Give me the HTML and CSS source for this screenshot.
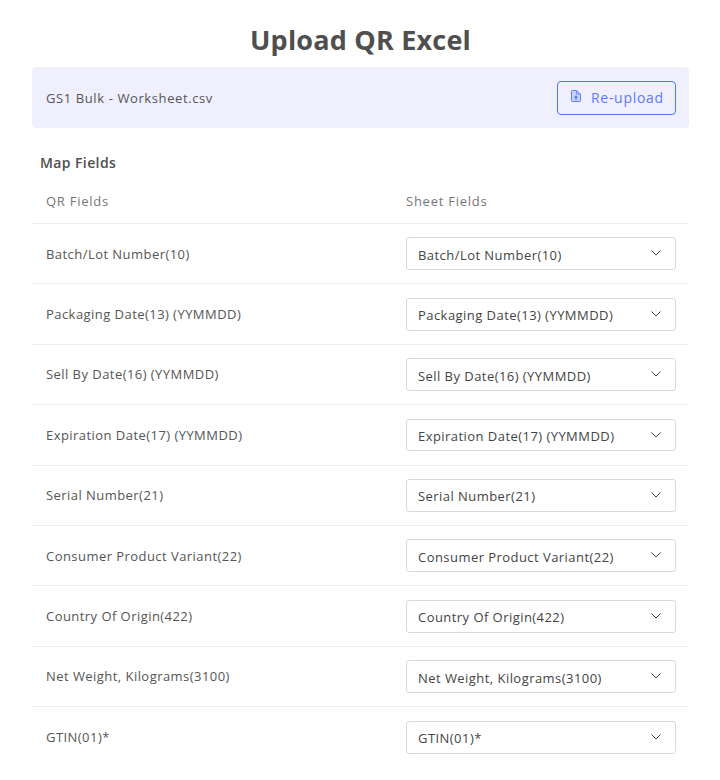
FILE: index.html
```html
<!DOCTYPE html>
<html lang="en">
<head>
    <meta charset="UTF-8">
    <title>Upload QR Excel</title>
    <link rel="stylesheet" href="styles.css">
</head>
<body>
    <div class="page">
        <h1 class="title">Upload QR Excel</h1>

        <div class="file-bar">
            <span class="file-name">GS1 Bulk - Worksheet.csv</span>
            <button class="upload-btn">
                <svg class="upload-icon" viewBox="0 0 10 12" width="10" height="12">
                    <path class="upload-sheet" d="M1.500.500h4.200l3.800 3.800v6.200a1 1 0 0 1-1 1h-7a1 1 0 0 1-1-1v-9a1 1 0 0 1 1-1z"/>
                    <path class="upload-fold" d="M5.500 .500v3.500h4"/>
                    <path class="upload-arrow" d="M5 5.200 2.800 7.500h1.500v2.300h1.400V7.500h1.500z"/>
                </svg>
                <span>Re-upload</span>
            </button>
        </div>

        <h2 class="map-title">Map Fields</h2>

        <div class="map-head">
            <span>QR Fields</span>
            <span>Sheet Fields</span>
        </div>

        <div class="map-row">
            <span class="field-name">Batch/Lot Number(10)</span>
            <div class="select-box"><span>Batch/Lot Number(10)</span><svg class="chevron" viewBox="0 0 10 6" width="10" height="6"><path d="M.5.500 5 5 9.500.500" fill="none" stroke="currentColor"/></svg></div>
        </div>
        <div class="map-row">
            <span class="field-name">Packaging Date(13) (YYMMDD)</span>
            <div class="select-box"><span>Packaging Date(13) (YYMMDD)</span><svg class="chevron" viewBox="0 0 10 6" width="10" height="6"><path d="M.5.500 5 5 9.500.500" fill="none" stroke="currentColor"/></svg></div>
        </div>
        <div class="map-row">
            <span class="field-name">Sell By Date(16) (YYMMDD)</span>
            <div class="select-box"><span>Sell By Date(16) (YYMMDD)</span><svg class="chevron" viewBox="0 0 10 6" width="10" height="6"><path d="M.5.500 5 5 9.500.500" fill="none" stroke="currentColor"/></svg></div>
        </div>
        <div class="map-row">
            <span class="field-name">Expiration Date(17) (YYMMDD)</span>
            <div class="select-box"><span>Expiration Date(17) (YYMMDD)</span><svg class="chevron" viewBox="0 0 10 6" width="10" height="6"><path d="M.5.500 5 5 9.500.500" fill="none" stroke="currentColor"/></svg></div>
        </div>
        <div class="map-row">
            <span class="field-name">Serial Number(21)</span>
            <div class="select-box"><span>Serial Number(21)</span><svg class="chevron" viewBox="0 0 10 6" width="10" height="6"><path d="M.5.500 5 5 9.500.500" fill="none" stroke="currentColor"/></svg></div>
        </div>
        <div class="map-row">
            <span class="field-name">Consumer Product Variant(22)</span>
            <div class="select-box"><span>Consumer Product Variant(22)</span><svg class="chevron" viewBox="0 0 10 6" width="10" height="6"><path d="M.5.500 5 5 9.500.500" fill="none" stroke="currentColor"/></svg></div>
        </div>
        <div class="map-row">
            <span class="field-name">Country Of Origin(422)</span>
            <div class="select-box"><span>Country Of Origin(422)</span><svg class="chevron" viewBox="0 0 10 6" width="10" height="6"><path d="M.5.500 5 5 9.500.500" fill="none" stroke="currentColor"/></svg></div>
        </div>
        <div class="map-row">
            <span class="field-name">Net Weight, Kilograms(3100)</span>
            <div class="select-box"><span>Net Weight, Kilograms(3100)</span><svg class="chevron" viewBox="0 0 10 6" width="10" height="6"><path d="M.5.500 5 5 9.500.500" fill="none" stroke="currentColor"/></svg></div>
        </div>
        <div class="map-row map-row-last">
            <span class="field-name">GTIN(01)*</span>
            <div class="select-box"><span>GTIN(01)*</span><svg class="chevron" viewBox="0 0 10 6" width="10" height="6"><path d="M.5.500 5 5 9.500.500" fill="none" stroke="currentColor"/></svg></div>
        </div>
    </div>
</body>
</html>
```

FILE: styles.css
```css
html, body {
    height: 780px;
    overflow: hidden;
}

body {
    font-family: 'Open Sans', 'Inter', sans-serif;
    background-color: #fff;
    color: #4f4f4f;
    margin: 0;
    padding: 0;
}

.page {
    margin: 0 31px 0 32px;
}

.title {
    margin: 0;
    padding-top: 24px;
    height: 43px;
    font-size: 27px;
    line-height: 32px;
    font-weight: 700;
    letter-spacing: 0.2px;
    text-align: center;
    color: #4f4f4f;
}

.file-bar {
    display: flex;
    justify-content: space-between;
    align-items: center;
    height: 61px;
    padding: 0 13px 0 14px;
    background-color: #f0effd;
    border-radius: 4px;
}

.file-name {
    font-size: 13px;
    letter-spacing: 0.6px;
    color: #555;
}

.upload-btn {
    display: flex;
    align-items: center;
    gap: 10px;
    width: 119px;
    height: 34px;
    padding: 0 0 0 13px;
    font-family: inherit;
    font-size: 14px;
    letter-spacing: 0.7px;
    white-space: nowrap;
    color: #5b7cfa;
    background: transparent;
    border: 1px solid #4f76f6;
    border-radius: 4px;
}

.upload-icon {
    margin-top: -3px;
}

.upload-sheet {
    fill: #c9d3fc;
    stroke: #5b7cfa;
}

.upload-fold {
    fill: none;
    stroke: #5b7cfa;
    stroke-width: 0.8;
}

.upload-arrow {
    fill: #4f76f6;
}

.map-title {
    margin: 26px 0 0 8px;
    font-size: 14px;
    line-height: 18px;
    font-weight: 600;
    letter-spacing: 0.4px;
    color: #4f4f4f;
}

.map-head {
    display: grid;
    grid-template-columns: 360px 1fr;
    height: 52px;
    padding: 20px 14px 0;
    box-sizing: border-box;
    font-size: 13px;
    line-height: 18px;
    letter-spacing: 0.75px;
    color: #777;
    border-bottom: 1px solid #ebebf3;
}

.map-row {
    display: grid;
    grid-template-columns: 360px 1fr;
    align-items: center;
    height: 60.4px;
    box-sizing: border-box;
    padding: 0 13px 0 14px;
    border-bottom: 1px solid #ebebf3;
}

.map-row-last {
    border-bottom: none;
}

.field-name {
    font-size: 13px;
    letter-spacing: 0.45px;
    color: #555;
}

.select-box {
    display: flex;
    justify-content: space-between;
    align-items: center;
    height: 32.8px;
    margin-top: 0.3px;
    box-sizing: border-box;
    padding: 2px 14px 0 11px;
    font-size: 13px;
    letter-spacing: 0.45px;
    color: #444;
    border: 1px solid #d9d9d9;
    border-radius: 3px;
}

.chevron {
    margin-top: -3px;
    color: #444;
}
```
